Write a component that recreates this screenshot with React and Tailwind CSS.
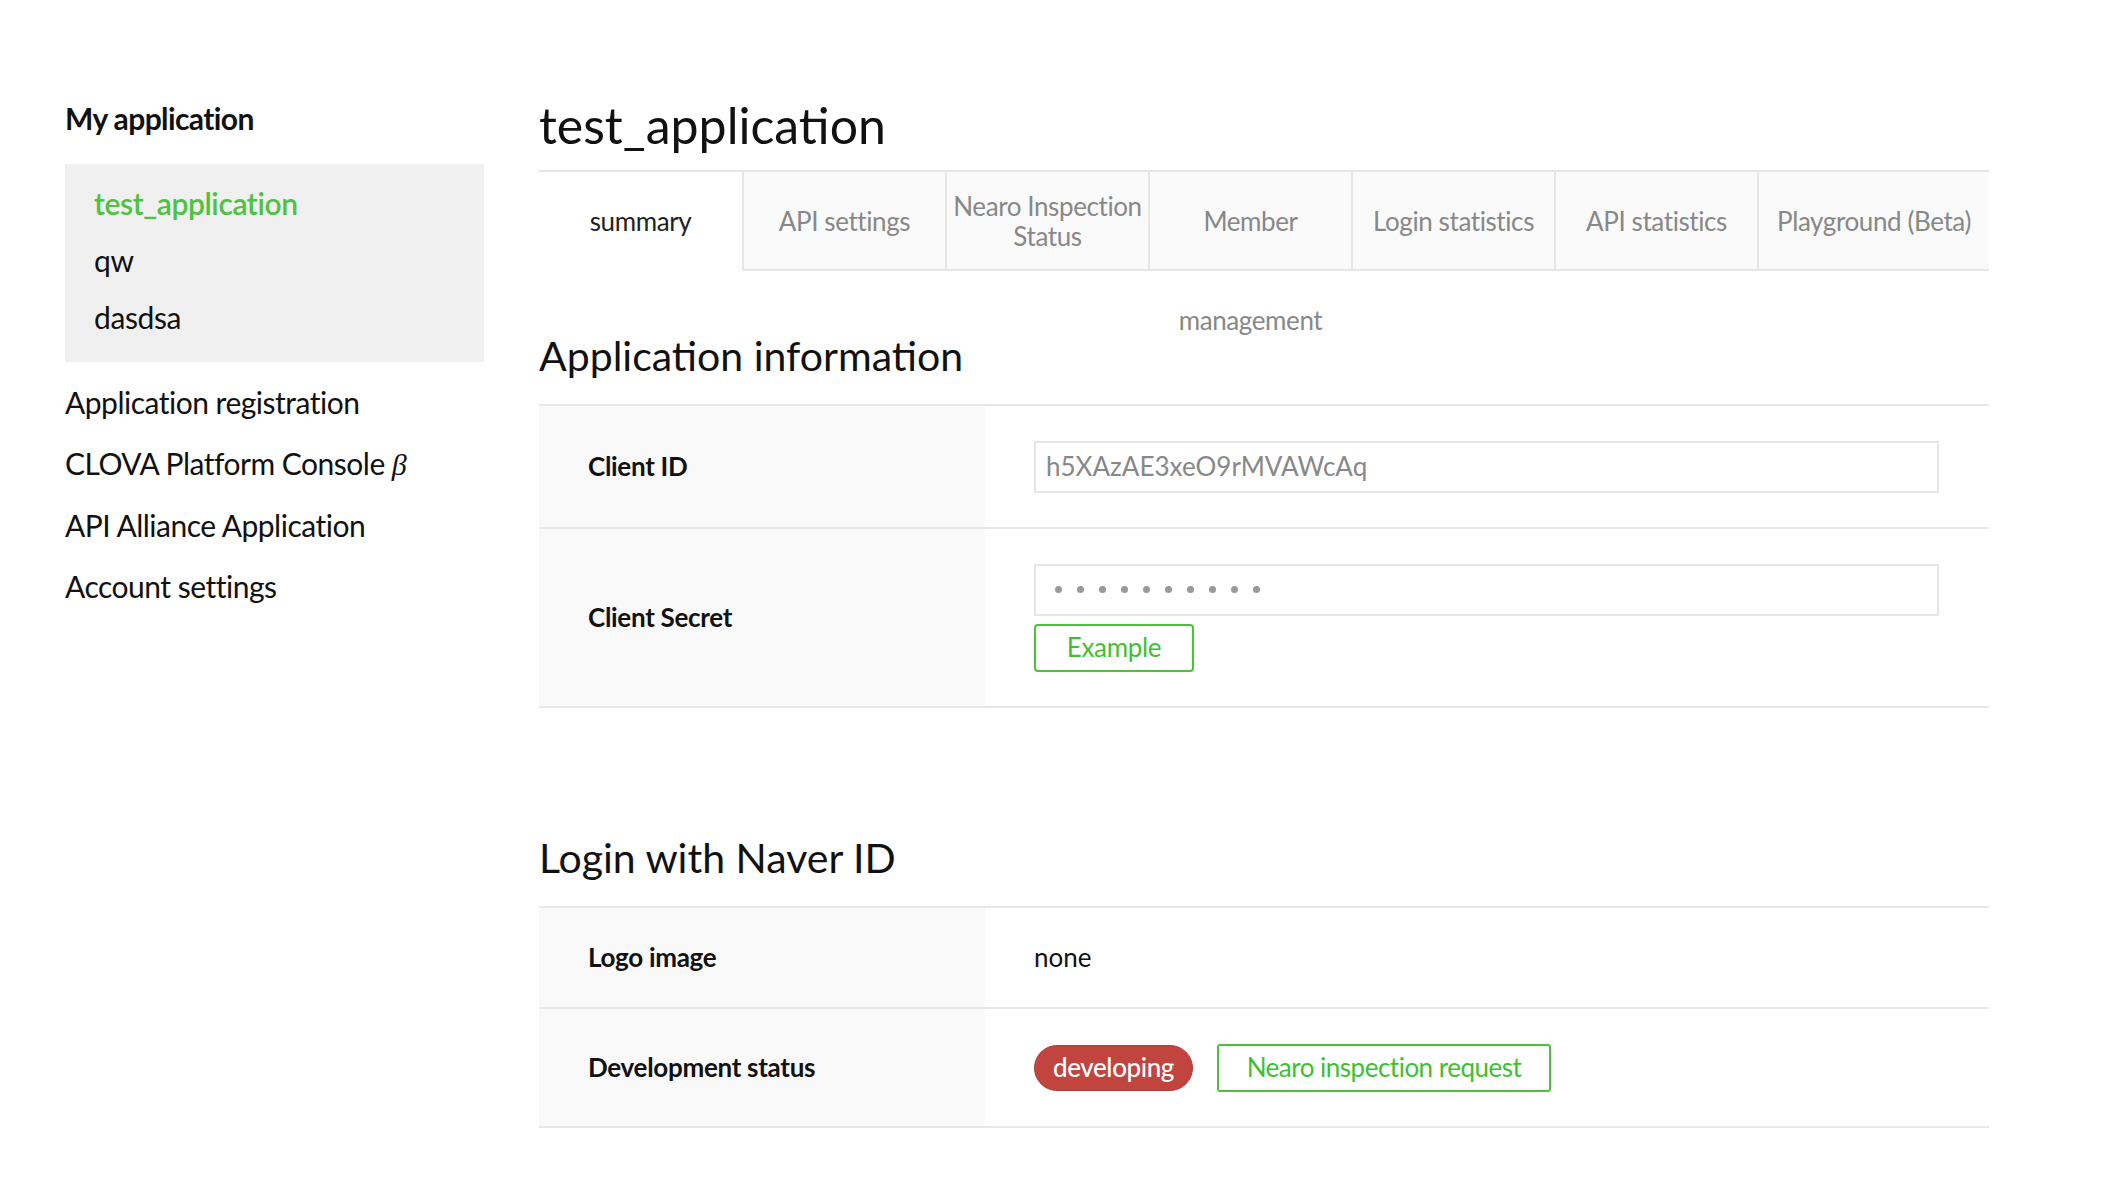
import React from 'react'

const tabs = [
  { label: 'summary', active: true },
  { label: 'API settings' },
  { label: ['Nearo Inspection', 'Status'], tight: true },
  { label: 'Member management' },
  { label: 'Login statistics' },
  { label: 'API statistics' },
  { label: 'Playground (Beta)', last: true },
]

const apps = ['test_application', 'qw', 'dasdsa']
const links = ['Application registration', 'CLOVA Platform Console', 'API Alliance Application', 'Account settings']

function Row({ label, children, h }) {
  return (
    <div className={`flex border-b-2 border-[#e8e8e8] ${h}`}>
      <div className="w-[446px] shrink-0 bg-[#f9f9f9] pl-[49px] flex items-center text-[26px] font-bold text-[#111] tracking-[-0.3px]">
        {label}
      </div>
      <div className="flex-1 pl-[49px] pr-[50px] flex flex-col justify-center">{children}</div>
    </div>
  )
}

export default function App() {
  return (
    <div className="min-h-screen bg-white flex font-['Lato',sans-serif] text-[#111]">
      {/* Sidebar */}
      <aside className="ml-[65px] w-[419px] pt-[101px] shrink-0">
        <h2 className="text-[30px] font-bold leading-[34px] tracking-[-0.6px]">My application</h2>
        <div className="mt-[29px] bg-[#f0f0f0] pt-[11px] pb-[16px] pl-[29px]">
          {apps.map((a, i) => (
            <div
              key={a}
              className={`text-[30px] leading-[57px] tracking-[-0.4px] ${i === 0 ? 'text-[#4fc23f] font-semibold' : 'text-[#111]'}`}
            >
              {a}
            </div>
          ))}
        </div>
        <nav className="mt-[10px]">
          {links.map((l, i) => (
            <div key={l} className="text-[30px] leading-[61px] tracking-[-0.5px]">
              {l}
              {i === 1 && <span className="italic font-['Liberation_Serif',serif]"> β</span>}
            </div>
          ))}
        </nav>
      </aside>

      {/* Main */}
      <main className="ml-[55px] w-[1450px] pt-[95px] pb-[60px]">
        <h1 className="text-[50px] leading-[60px] font-normal">test_application</h1>

        <div className="mt-[15px] flex border-t-2 border-[#e6e6e6] h-[101px]">
          {tabs.map((t, i) => (
            <div
              key={i}
              className={`${t.last ? 'flex-1' : 'w-[203px]'} shrink-0 text-center text-[26px] tracking-[-0.4px] px-[4px] ${
                t.active
                  ? 'bg-white text-[#222]'
                  : 'bg-[#fafafa] text-[#888] border-l-2 border-b-2 border-[#e6e6e6]'
              } ${t.tight ? 'flex flex-col items-center justify-center leading-[30px] whitespace-nowrap' : 'leading-[99px]'}`}
            >
              {Array.isArray(t.label) ? t.label.map(s => <span key={s}>{s}</span>) : t.label}
            </div>
          ))}
        </div>

        <h3 className="mt-[61px] text-[41px] leading-[48px] font-normal">Application information</h3>
        <div className="mt-[24px] border-t-2 border-[#e8e8e8]">
          <Row label="Client ID" h="h-[123px]">
            <div className="h-[52px] border-2 border-[#e6e6e6] pl-[10px] flex items-center text-[26px] text-[#888]">
              h5XAzAE3xeO9rMVAWcAq
            </div>
          </Row>
          <Row label="Client Secret" h="h-[179px]">
            <div className="h-[52px] border-2 border-[#e6e6e6] pl-[19px] flex items-center gap-[15px]">
              {Array.from({ length: 10 }).map((_, i) => (
                <span key={i} className="w-[7px] h-[7px] rounded-full bg-[#999]" />
              ))}
            </div>
            <button className="mt-[8px] w-[160px] h-[48px] border-2 border-[#4cc23b] rounded-[4px] text-[#3fbf33] text-[26px] tracking-[-0.3px] bg-white">
              Example
            </button>
          </Row>
        </div>

        <h3 className="mt-[126px] text-[41px] leading-[48px] font-normal">Login with Naver ID</h3>
        <div className="mt-[24px] border-t-2 border-[#e8e8e8]">
          <Row label="Logo image" h="h-[101px]">
            <span className="text-[26px]">none</span>
          </Row>
          <Row label="Development status" h="h-[119px]">
            <div className="flex items-center gap-[24px]">
              <span className="w-[159px] h-[46px] rounded-full bg-[#c2443f] border border-[#b23a36] text-white text-[26px] font-medium tracking-[-0.4px] flex items-center justify-center">
                developing
              </span>
              <button className="w-[334px] h-[48px] border-2 border-[#4cc23b] rounded-[3px] text-[#3fbf33] text-[26px] tracking-[-0.5px] bg-white">
                Nearo inspection request
              </button>
            </div>
          </Row>
        </div>
      </main>
    </div>
  )
}
